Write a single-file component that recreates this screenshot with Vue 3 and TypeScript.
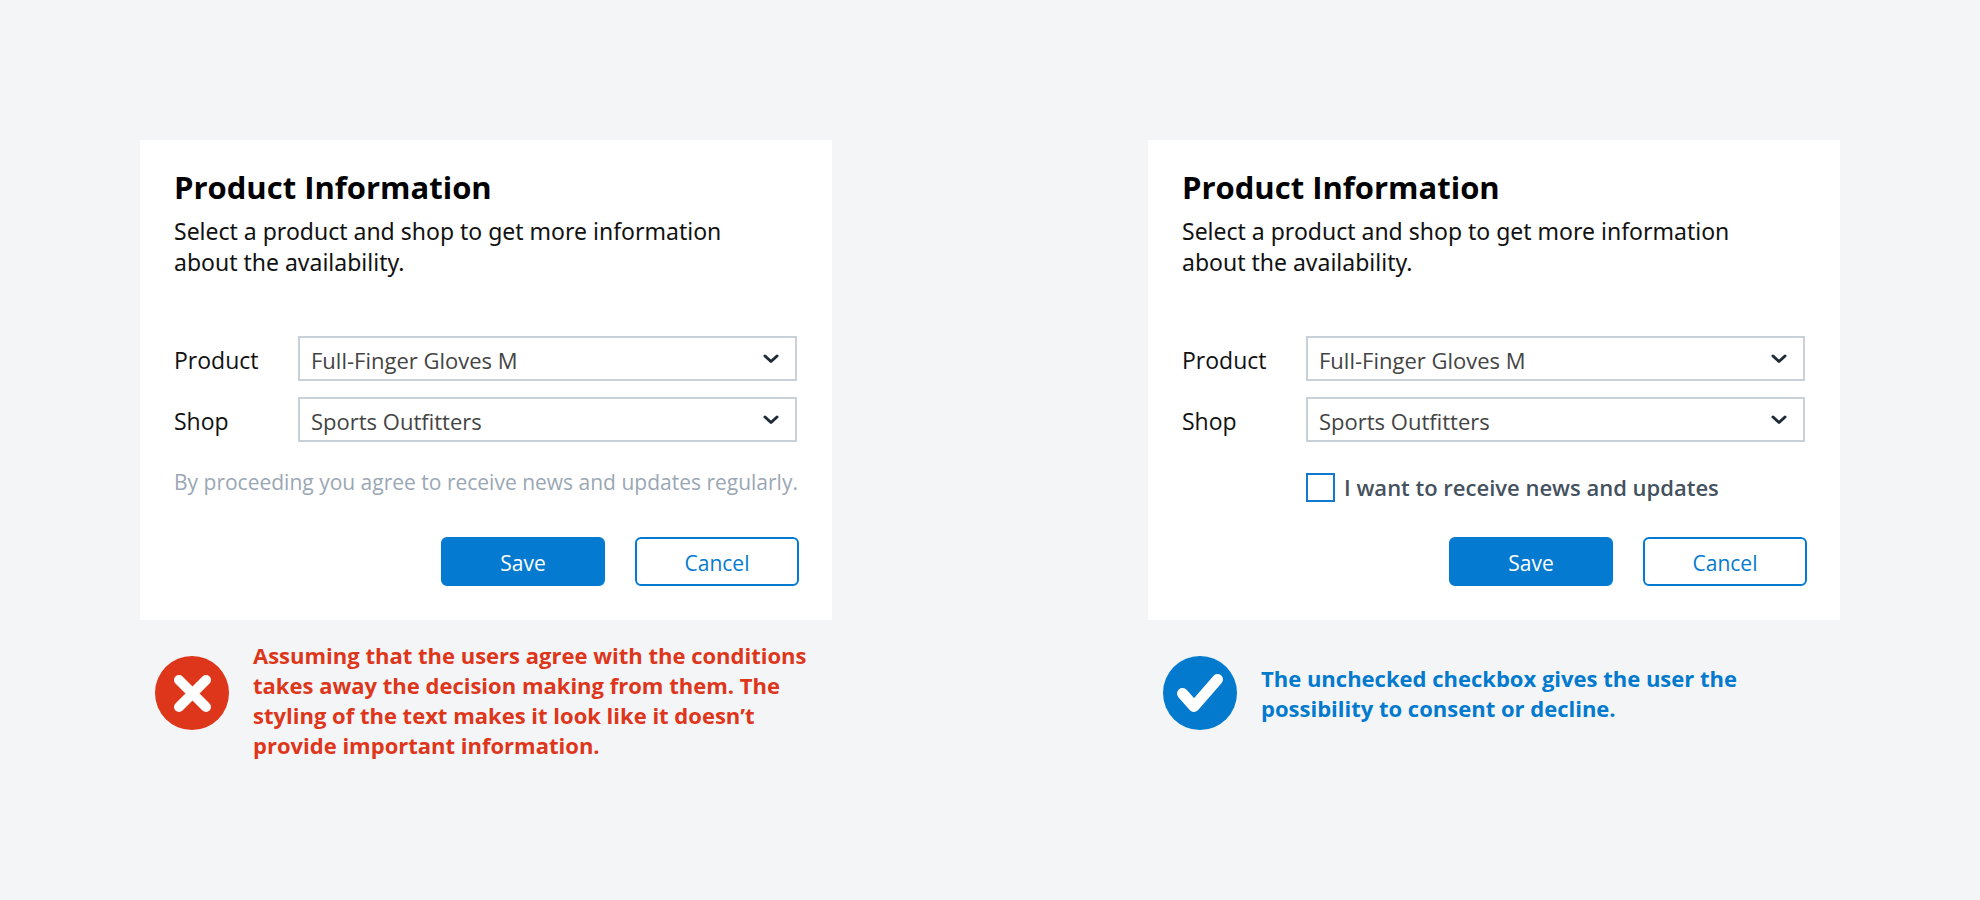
<script setup lang="ts">
import { ref } from 'vue'

interface Example {
  id: string
  verdict: 'bad' | 'good'
  caption: string
}

const products: string[] = ['Full-Finger Gloves M', 'Full-Finger Gloves L']
const shops: string[] = ['Sports Outfitters', 'Bike World']

const examples: Example[] = [
  {
    id: 'implied',
    verdict: 'bad',
    caption:
      'Assuming that the users agree with the conditions takes away the decision making from them. The styling of the text makes it look like it doesn’t provide important information.',
  },
  {
    id: 'explicit',
    verdict: 'good',
    caption: 'The unchecked checkbox gives the user the possibility to consent or decline.',
  },
]

const forms = ref(
  examples.map(() => ({ product: products[0], shop: shops[0], consent: false })),
)
</script>

<template>
  <main class="page">
    <section v-for="(example, i) in examples" :key="example.id" class="example">
      <form class="card" @submit.prevent>
        <h2 class="title">Product Information</h2>
        <p class="intro">Select a product and shop to get more information about the availability.</p>

        <div class="field">
          <label class="label" :for="example.id + '-product'">Product</label>
          <div class="picker">
            <select :id="example.id + '-product'" v-model="forms[i].product" class="select">
              <option v-for="p in products" :key="p" :value="p">{{ p }}</option>
            </select>
            <svg class="chevron" viewBox="0 0 16 10" aria-hidden="true"><path d="M2 2l6 5.500l6-5.500" /></svg>
          </div>
        </div>
        <div class="field">
          <label class="label" :for="example.id + '-shop'">Shop</label>
          <div class="picker">
            <select :id="example.id + '-shop'" v-model="forms[i].shop" class="select">
              <option v-for="s in shops" :key="s" :value="s">{{ s }}</option>
            </select>
            <svg class="chevron" viewBox="0 0 16 10" aria-hidden="true"><path d="M2 2l6 5.500l6-5.500" /></svg>
          </div>
        </div>

        <div class="terms">
          <p v-if="example.verdict === 'bad'" class="note">
            By proceeding you agree to receive news and updates regularly.
          </p>
          <div v-else class="consent">
            <input :id="example.id + '-consent'" v-model="forms[i].consent" class="check" type="checkbox" />
            <label :for="example.id + '-consent'">I want to receive news and updates</label>
          </div>
        </div>

        <div class="actions">
          <button type="submit" class="button primary">Save</button>
          <button type="button" class="button">Cancel</button>
        </div>
      </form>

      <div class="verdict" :class="example.verdict">
        <svg class="mark" viewBox="0 0 74 74" aria-hidden="true">
          <circle cx="37" cy="37" r="37" />
          <path v-if="example.verdict === 'bad'" class="cross" d="M24 24L51 51M51 24L24 51" />
          <path v-else class="tick" d="M19.500 37.500L31 50.500L54.500 23.500" />
        </svg>
        <p class="caption">{{ example.caption }}</p>
      </div>
    </section>
  </main>
</template>

<style>
html,
body {
  margin: 0;
  background: #f3f5f7;
}
</style>

<style scoped>
.page {
  display: flex;
  flex-wrap: wrap;
  justify-content: space-between;
  gap: 48px;
  min-height: 100vh;
  box-sizing: border-box;
  padding: 140px;
  font-family: 'Open Sans', 'Noto Sans', sans-serif;
  background: #f3f5f7;
}

.example {
  flex: 0 1 692px;
  min-width: 0;
}

.card {
  padding: 25px 34px 34px;
  background: #fff;
}

.title {
  margin: 0;
  font-size: 31px;
  line-height: 44px;
  font-weight: 700;
  color: #000;
}

.intro {
  max-width: 580px;
  margin: 7px 0 58px;
  font-family: 'Noto Sans', 'Open Sans', sans-serif;
  font-size: 23px;
  line-height: 31px;
  color: #111;
}

.field {
  display: flex;
  align-items: center;
  margin: 0 1px 16px 0;
}

.label {
  flex: 0 0 124px;
  padding-top: 4px;
  font-size: 23px;
  line-height: 31px;
  color: #111;
}

.picker {
  display: grid;
  flex: 1;
  align-items: center;
}

.select {
  grid-area: 1 / 1;
  appearance: none;
  width: 100%;
  height: 45px;
  padding: 2px 40px 0 11px;
  border: 2px solid #c8d1d9;
  border-radius: 0;
  background: #fff;
  font-family: inherit;
  font-size: 22px;
  color: #444;
}

.chevron {
  grid-area: 1 / 1;
  justify-self: end;
  width: 16px;
  height: 10px;
  margin-right: 18px;
  pointer-events: none;
}

.chevron path {
  fill: none;
  stroke: #1f2a37;
  stroke-width: 3;
  stroke-linecap: round;
  stroke-linejoin: round;
}

.terms {
  min-height: 79px;
}

.note {
  margin: 0;
  padding-top: 9px;
  font-size: 21px;
  line-height: 30px;
  color: #9aa7b4;
  white-space: nowrap;
}

.consent {
  display: flex;
  align-items: center;
  gap: 9px;
  margin-left: 124px;
  padding-top: 14px;
  font-size: 22px;
  line-height: 30px;
  font-weight: 600;
  color: #44515e;
}

.check {
  appearance: none;
  width: 29px;
  height: 29px;
  margin: 0;
  border: 2px solid #1279d0;
  background: #fff;
}

.check:checked {
  background: #057ad1;
  box-shadow: inset 0 0 0 4px #fff;
}

.actions {
  display: flex;
  justify-content: flex-end;
  gap: 30px;
  margin-right: -1px;
}

.button {
  width: 164px;
  height: 49px;
  padding: 2px 0 0;
  border: 2px solid #057ad1;
  border-radius: 6px;
  background: #fff;
  font-family: inherit;
  font-size: 21px;
  color: #057ad1;
}

.button.primary {
  background: #057ad1;
  color: #fff;
}

.verdict {
  display: flex;
  align-items: flex-start;
  gap: 24px;
  padding: 20px 0 0 15px;
}

.mark {
  flex: none;
  width: 74px;
  height: 74px;
  margin-top: 16px;
}

.bad {
  color: #de361a;
}

.good {
  color: #037ace;
}

.mark circle {
  fill: currentColor;
}

.mark path {
  fill: none;
  stroke: #fff;
  stroke-linecap: round;
  stroke-linejoin: round;
}

.cross {
  stroke-width: 10;
}

.tick {
  stroke-width: 11;
}

.caption {
  display: flex;
  align-items: center;
  min-height: 106px;
  max-width: 560px;
  margin: 0;
  font-size: 22px;
  line-height: 30px;
  font-weight: 700;
}
</style>
